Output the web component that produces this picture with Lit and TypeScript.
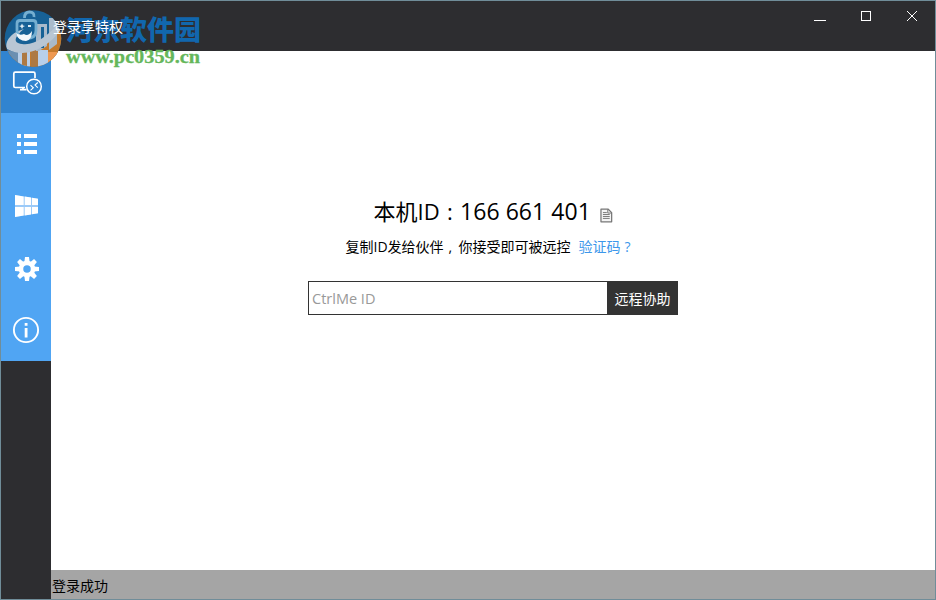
import { LitElement, html, css, svg } from "lit";
import { customElement } from "lit/decorators.js";

const menu = [
  svg`<g fill="none" stroke="#fff" stroke-width="1.700">
      <path d="M25 36.500H15.300q-1.500 0-1.500-1.500V22.700q0-1.500 1.500-1.500H33.500q1.500 0 1.500 1.500V27"/>
      <path d="M20 38.600h6.500M23 36.500v2"/><circle cx="34" cy="35.500" r="7.300" stroke-width="1.500"/>
      <path d="M30.500 34.200l2.800 2.600-2.800 2.600M37.800 31.500l-2.800 2.600 2.800 2.600" stroke-width="1.100"/></g>`,
  svg`<path fill="#fff" d="M17 21h4v4h-4zM24 21h13v4H24zM17 29h4v4h-4zM24 29h13v4H24zM17 37h4v4h-4zM24 37h13v4H24z"/>`,
  svg`<path fill="#9bcaf8" d="M15 20l23 3.800v14.400L15 42z"/><path fill="#fff" d="M15 20l8.700 1.500V30H15zM24.700 21.600l6.300 1V30h-6.300zM32 22.800l6 1V30h-6zM15 32h8.700v8.600L15 42zM24.700 32H31v7.400l-6.300 1zM32 32h6v6.200l-6 1z"/>`,
  svg`<g transform="translate(27 32)"><g fill="#fff">
      ${[0, 45, 90, 135, 180, 225, 270, 315].map(a => svg`<path transform="rotate(${a})" d="M-2-12h4l.6 5h-5.200z"/>`)}</g>
      <circle r="6" fill="none" stroke="#fff" stroke-width="4.500"/></g>`,
  svg`<circle cx="26" cy="31" r="12.100" fill="none" stroke="#fff" stroke-width="1.900"/><path fill="#fff" d="M24.700 24h2.800v2.800h-2.800zM24.700 29h2.800v9.500h-2.800z"/>`,
];

@customElement("app-root")
export class AppRoot extends LitElement {
  static styles = css`
    :host { display: block; width: 936px; height: 600px; position: relative; overflow: hidden;
      font-family: "Open Sans", "Noto Sans CJK SC", sans-serif; font-size: 14px; color: #000; }
    * { box-sizing: border-box; }
    svg { display: block; }
    .window { height: 600px; border: 1px solid #708d99; background: #fff; display: grid;
      grid-template: 50px 1fr 29px / 50px 1fr; }
    .title { grid-column: 1 / 3; background: #2d2d30; display: flex; justify-content: space-between; }
    .title-text { position: relative; z-index: 2; color: #fff; padding: 15px 0 0 52px; line-height: 22px; }
    .controls { width: 136px; height: 50px; }
    .side { grid-row: 2 / 4; background: #2d2d30; }
    .item { height: 62px; background: #50a5f3; overflow: hidden; }
    .item svg { margin-left: -1px; }
    .item.active { background: #3184d0; }
    .main { display: flex; flex-direction: column; align-items: center; padding-top: 142px; line-height: 1; }
    .id { display: flex; font-size: 22px; line-height: 36px; height: 36px; white-space: pre; width: 239px; }
    .colon { width: 21px; text-align: center; }
    .num { font-size: 23px; letter-spacing: 0.050px; }
    .copy { margin: 15px 0 0 9px; }
    .hint { display: flex; white-space: pre; line-height: 22px; height: 22px; margin-top: 7px; width: 295px; }
    .comma { width: 15px; padding-left: 5px; overflow: hidden; }
    .link { color: #3c97ea; margin-left: 8px; }
    .ask { padding-left: 4px; }
    .form { display: flex; width: 370px; height: 34px; margin-top: 23px; }
    .field { width: 299px; border: 1px solid #333; border-right: 0; line-height: 33px; padding-left: 3px; color: #999; font-size: 14.500px; }
    .button { flex: 1; background: #333; color: #fff; text-align: center; line-height: 35px; }
    .status { background: #a5a5a5; line-height: 31px; padding-left: 1px; }
    .mark { position: absolute; left: 0; top: 0; z-index: 1; pointer-events: none; }
    .brand { font: 900 27px "Noto Sans CJK SC", sans-serif; }
    .site { font: bold 18px "Liberation Serif", serif; }
  `;

  render() {
    return html`
      <div class="window">
        <header class="title">
          <span class="title-text">登录享特权</span>
          <svg class="controls" viewBox="799 1 136 50" fill="none" stroke="#fff" shape-rendering="crispEdges">
            <path d="M814 20.500h12M861.500 11.500h9v9h-9zM907 11l10 10M917 11l-10 10"/>
          </svg>
        </header>
        <nav class="side">
          ${menu.map((icon, i) => html`<div class="item ${i === 0 ? "active" : ""}"><svg width="51" height="62" viewBox="0 0 51 62">${icon}</svg></div>`)}
        </nav>
        <main class="main">
          <div class="id"><span>本机ID</span><span class="colon">:</span><span class="num">166 661 401</span>
            <svg class="copy" width="13" height="15" viewBox="0 0 13 15"><path d="M1 1h7.500L12 4.500V14H1z" fill="#f4f4f4" stroke="#777" stroke-width="1.300" stroke-linejoin="round"/><path d="M8 1v4h4M3 4.500h4M3 6.500h7M3 8.500h7M3 10.500h7" fill="none" stroke="#777" stroke-width="1"/></svg>
          </div>
          <div class="hint"><span>复制ID发给伙伴</span><span class="comma">,</span><span>你接受即可被远控</span><span class="link">验证码<span class="ask">?</span></span></div>
          <div class="form"><div class="field">CtrlMe ID</div><div class="button">远程协助</div></div>
        </main>
        <footer class="status">登录成功</footer>
      </div>
      <svg class="mark" width="210" height="75" viewBox="0 0 210 75">
        <defs><clipPath id="disc"><circle cx="33" cy="38.500" r="28.300"/></clipPath></defs>
        <g clip-path="url(#disc)">
          <path d="M4 8h59v60H4z" fill="#176196"/>
          <path d="M5 52Q40 56 62 26V68H5z" fill="#c47a2c"/>
          <path d="M5 49Q16 54 24 50V68H5z" fill="#6b8fb1"/>
          <path d="M46 52H63V68H46z" fill="#ee9850"/>
          <path d="M18 51h12v17H18zM38 50h10v18H38z" fill="#b8cfea"/>
          <path d="M22 52h5v16h-5zM31 50h7v18h-7z" fill="#ad7943"/>
          <path d="M36 24h11v22l-8 5h-3zM49 18h8v26l-8 6z" fill="#a9bacb"/>
          <path d="M41 27h3v21h-3z" fill="#176196"/>
          <path d="M7 49C4 41 12 32 24 29 15 36 12 43 22 44c13 2 25-9 34-17l5 2C50 46 27 60 7 49z" fill="#b9c6d4"/>
        </g>
        <g fill="none" stroke="#75afd1" stroke-width="2.800"><path d="M20 20.500q-3 0-3 3v7q0 8 9.500 8t9.500-8v-7q0-3-3-3z"/><path d="M24.500 18q0-6 5-6t4.500 5"/></g>
        <path d="M16 33q4 3 8 1 4 3 8-3 0 9-6 10-8 0-10-8z" fill="#f4f8fb"/>
        <path d="M22 23.500l1 2 2 .5-2 1-1 2-1-2-2-1 2-.5zM28 25h3v2h-3z" fill="#dceaf2"/>
        <text class="brand" x="66" y="40" textLength="135" lengthAdjust="spacingAndGlyphs" fill="#1167ae">河东软件园</text>
        <text class="site" x="66" y="63" textLength="134" lengthAdjust="spacingAndGlyphs" fill="#65b75b" stroke="#65b75b" stroke-width=".3">www.pc0359.cn</text>
      </svg>`;
  }
}
